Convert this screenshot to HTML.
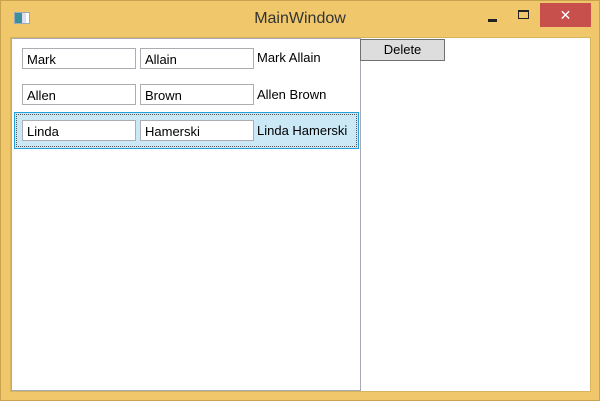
<!DOCTYPE html>
<html><head><meta charset="utf-8"><style>
*{margin:0;padding:0;box-sizing:border-box}
body{width:600px;height:401px;overflow:hidden;background:#efc56a;font-family:"Segoe UI","Liberation Sans",sans-serif;font-size:13px;color:#000;position:relative}
.win{position:absolute;left:0;top:0;width:600px;height:401px;border:1px solid #c9a24e;background:#f0c76b}
.title{position:absolute;left:0;width:600px;top:10px;text-align:center;font-size:16px;color:#333}
.icon{position:absolute;left:14px;top:12px;width:16px;height:12px;border:1px solid #9ab;background:linear-gradient(90deg,#3a8f9a 0 50%,#dde 50% 80%,#fff 80%)}
.min{position:absolute;left:488px;top:19px;width:9px;height:3px;background:#222}
.max{position:absolute;left:518px;top:10px;width:11px;height:9px;border:1px solid #222;border-top-width:2px}
.close{position:absolute;left:540px;top:3px;width:51px;height:24px;background:#c7504c;color:#fff;text-align:center;font-size:14px;line-height:24px}
.client{position:absolute;left:10px;top:37px;width:581px;height:355px;background:#fff;border:1px solid #d9b45e}
.lb{position:absolute;left:11px;top:38px;width:350px;height:353px;border:1px solid #a9a9b4;background:#fff}
.tb{position:absolute;height:21px;width:114px;border:1px solid #abadb3;background:#fff;padding-left:4px;line-height:21px}
.lbl{position:absolute;line-height:19px}
.sel{position:absolute;left:14px;top:112px;width:345px;height:37px;background:#cbe8f6;border:1px solid #26a0da}
.sel i{position:absolute;left:1px;top:1px;right:1px;bottom:1px;border:1px dotted #555}
.btn{position:absolute;left:360px;top:39px;width:85px;height:22px;background:#dddddd;border:1px solid #707070;text-align:center;line-height:20px}
</style></head><body>
<div class="win"></div>
<div class="icon"></div>
<div class="title">MainWindow</div>
<div class="min"></div><div class="max"></div>
<div class="close">✕</div>
<div class="client"></div>
<div class="lb"></div>
<div class="sel"><i></i></div>
<div class="tb" style="left:22px;top:48px">Mark</div>
<div class="tb" style="left:140px;top:48px">Allain</div>
<div class="lbl" style="left:257px;top:48px">Mark Allain</div>
<div class="tb" style="left:22px;top:84px">Allen</div>
<div class="tb" style="left:140px;top:84px">Brown</div>
<div class="lbl" style="left:257px;top:85px">Allen Brown</div>
<div class="tb" style="left:22px;top:120px">Linda</div>
<div class="tb" style="left:140px;top:120px">Hamerski</div>
<div class="lbl" style="left:257px;top:121px">Linda Hamerski</div>
<div class="btn">Delete</div>
</body></html>
